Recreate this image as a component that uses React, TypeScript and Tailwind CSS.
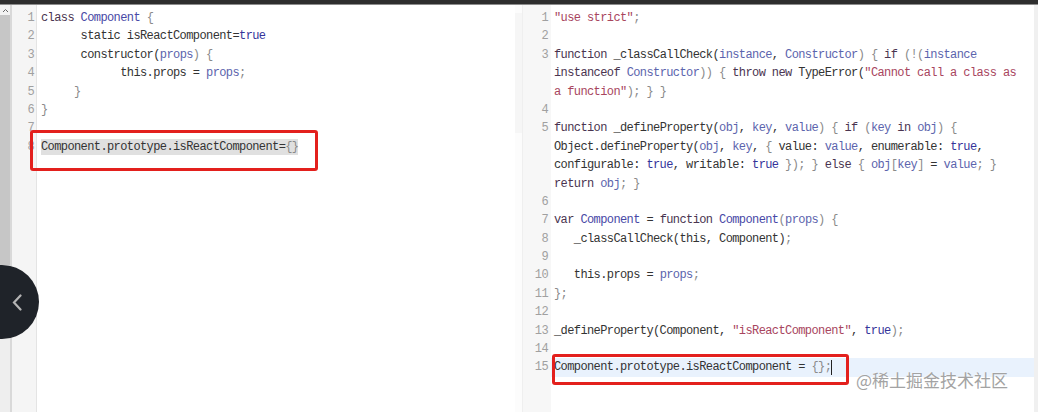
import React from "react";

type Tok = [string, string];
const C: Record<string, string> = {
  k: "text-[#4a3450]",
  d: "text-[#4848a6]",
  v: "text-[#5c64ad]",
  a: "text-[#34349a]",
  s: "text-[#a8455e]",
  p: "text-[#333333]",
  b: "text-[#8a8a8a]",
};

const L = (...t: Tok[]) => t;

const leftLines: { n: string; t: Tok[]; hl?: boolean }[] = [
  { n: "1", t: L(["k", "class "], ["d", "Component"], ["b", " {"]) },
  { n: "2", t: L(["p", "      static isReactComponent="], ["a", "true"]) },
  { n: "3", t: L(["p", "      constructor("], ["v", "props"], ["b", ") {"]) },
  { n: "4", t: L(["p", "            this.props = "], ["v", "props"], ["b", ";"]) },
  { n: "5", t: L(["b", "     }"]) },
  { n: "6", t: L(["b", "}"]) },
  { n: "7", t: [] },
  { n: "8", t: L(["p", "Component.prototype.isReactComponent="], ["b", "{}"]), hl: true },
];

const rightLines: { n: string; t: Tok[]; active?: boolean }[] = [
  { n: "1", t: L(["s", "\"use strict\""], ["b", ";"]) },
  { n: "2", t: [] },
  { n: "3", t: L(["k", "function "], ["p", "_classCallCheck("], ["v", "instance"], ["p", ", "], ["v", "Constructor"], ["b", ") { "], ["k", "if "], ["b", "(!("], ["v", "instance"]) },
  { n: "", t: L(["k", "instanceof "], ["v", "Constructor"], ["b", ")) { "], ["k", "throw new "], ["p", "TypeError("], ["s", "\"Cannot call a class as"]) },
  { n: "", t: L(["s", "a function\""], ["b", "); } }"]) },
  { n: "4", t: [] },
  { n: "5", t: L(["k", "function "], ["p", "_defineProperty("], ["v", "obj"], ["p", ", "], ["v", "key"], ["p", ", "], ["v", "value"], ["b", ") { "], ["k", "if "], ["b", "("], ["v", "key"], ["k", " in "], ["v", "obj"], ["b", ") {"]) },
  { n: "", t: L(["p", "Object.defineProperty("], ["v", "obj"], ["p", ", "], ["v", "key"], ["p", ", "], ["b", "{ "], ["p", "value: "], ["v", "value"], ["p", ", enumerable: "], ["a", "true"], ["p", ","]) },
  { n: "", t: L(["p", "configurable: "], ["a", "true"], ["p", ", writable: "], ["a", "true"], ["b", " }); } "], ["k", "else "], ["b", "{ "], ["v", "obj"], ["b", "["], ["v", "key"], ["b", "]"], ["p", " = "], ["v", "value"], ["b", "; }"]) },
  { n: "", t: L(["k", "return "], ["v", "obj"], ["b", "; }"]) },
  { n: "6", t: [] },
  { n: "7", t: L(["k", "var "], ["d", "Component"], ["p", " = "], ["k", "function "], ["d", "Component"], ["b", "("], ["v", "props"], ["b", ") {"]) },
  { n: "8", t: L(["p", "   _classCallCheck(this, Component)"], ["b", ";"]) },
  { n: "9", t: [] },
  { n: "10", t: L(["p", "   this.props = "], ["v", "props"], ["b", ";"]) },
  { n: "11", t: L(["b", "};"]) },
  { n: "12", t: [] },
  { n: "13", t: L(["p", "_defineProperty(Component, "], ["s", "\"isReactComponent\""], ["p", ", "], ["a", "true"], ["b", ");"]) },
  { n: "14", t: [] },
  { n: "15", t: L(["p", "Component.prototype.isReactComponent = "], ["b", "{};"]), active: true },
];

const mono = "font-['Liberation_Mono',monospace] text-[12px] tracking-[-0.6px] whitespace-pre";

function Toks({ t }: { t: Tok[] }) {
  return (
    <>
      {t.map(([c, s], i) => (
        <span key={i} className={C[c]}>
          {s}
        </span>
      ))}
    </>
  );
}

export default function App() {
  return (
    <div className="relative w-[1038px] h-[412px] overflow-hidden bg-white flex flex-col">
      <div className="h-[5px] bg-[#2e2e2e] border-b border-[#8c8c8c] shrink-0" />
      <div className="flex flex-1 min-h-0">
        {/* left scrollbar */}
        <div className="w-[10px] flex flex-col bg-[#eeeeee]">
          <div className="h-[10px] flex items-center justify-center bg-[#f2f2f2]">
            <svg width="7" height="5" viewBox="0 0 7 5">
              <path d="M1 4 L3.5 1.5 L6 4" stroke="#666" strokeWidth="1" fill="none" />
            </svg>
          </div>
          <div className="h-[250px] bg-[#c6c6c6]" />
        </div>
        <div className="w-[2px] bg-[#d9d9d9]" />
        {/* left gutter */}
        <div className={`w-[25px] bg-[#f5f5f5] border-r border-[#e4e4e4] pt-[4px] pr-[2px] text-right text-[#a0a0a0] ${mono}`}>
          {leftLines.map((l) => (
            <div key={l.n} className="h-[18.4px] leading-[18.4px]">
              {l.n}
            </div>
          ))}
        </div>
        {/* left code */}
        <div className={`w-[478px] pt-[4px] pl-[4px] ${mono}`}>
          {leftLines.map((l) => (
            <div key={l.n} className="h-[18.4px] leading-[18.4px]">
              {l.hl ? (
                <span className="bg-[#e0e0e0] py-[1px]">
                  <Toks t={l.t} />
                </span>
              ) : (
                <Toks t={l.t} />
              )}
            </div>
          ))}
        </div>
        {/* separator */}
        <div className="w-[7px] flex flex-col bg-[#fcfcfc]">
          <div className="h-[120px] mt-[8px] bg-[#f6f6f6]" />
        </div>
        {/* right gutter */}
        <div className={`w-[29px] bg-[#f7f7f7] border-l border-[#efefef] pt-[4px] pr-[3px] text-right text-[#a0a0a0] ${mono}`}>
          {rightLines.map((l, i) => (
            <div key={i} className="h-[18.4px] leading-[18.4px]">
              {l.n}
            </div>
          ))}
        </div>
        {/* right code */}
        <div className={`flex-1 pt-[4px] ${mono}`}>
          {rightLines.map((l, i) => (
            <div
              key={i}
              className={`h-[18.4px] leading-[18.4px] pl-[3px] ${l.active ? "bg-[#e9f2fd]" : ""}`}
            >
              <Toks t={l.t} />
              {l.active && <span className="inline-block w-[1px] h-[15px] bg-[#222] align-middle" />}
            </div>
          ))}
        </div>
        <div className="w-[4px] bg-[#f0f0f0]" />
      </div>

      {/* red highlight boxes */}
      <div className="absolute left-[30px] top-[130px] w-[288px] h-[41px] border-[3px] border-[#e3201d] rounded-[3px]" />
      <div className="absolute left-[552px] top-[354px] w-[297px] h-[31px] border-[3px] border-[#e3201d] rounded-[3px]" />

      {/* collapse handle */}
      <div className="absolute left-[-35px] top-[265px] w-[74px] h-[74px] rounded-full bg-[#1f2329] flex items-center justify-end pr-[17px]">
        <svg width="10" height="17" viewBox="0 0 10 17">
          <path d="M8.5 1.5 L2 8.5 L8.5 15.5" stroke="#b4b4b4" strokeWidth="2.2" fill="none" strokeLinecap="round" />
        </svg>
      </div>

      {/* watermark */}
      <div className="absolute left-[856px] top-[368px] text-[17px] leading-[24px] text-[#a3a3a3] font-['Noto_Sans_CJK_SC',sans-serif] [text-shadow:0_0_2px_#ffffff]">
        @稀土掘金技术社区
      </div>
    </div>
  );
}
